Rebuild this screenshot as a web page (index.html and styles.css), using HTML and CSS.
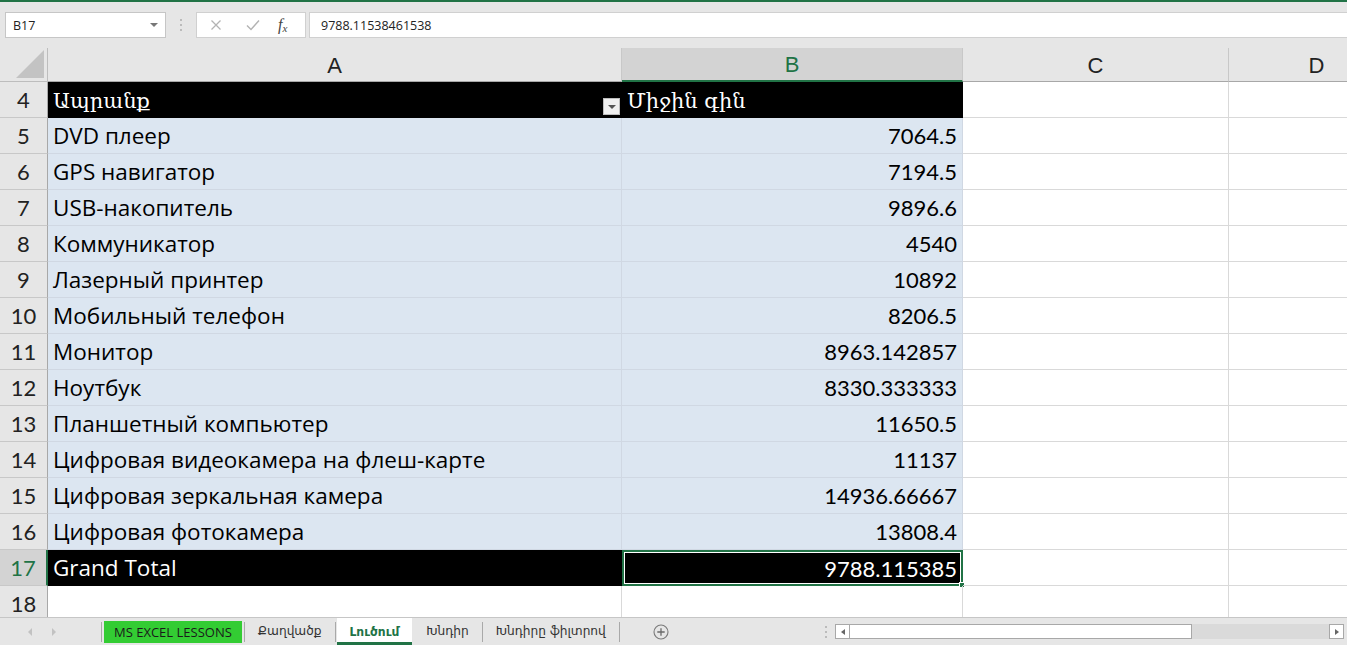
FILE: index.html
```html
<!DOCTYPE html>
<html>
<head>
<meta charset="utf-8">
<link rel="stylesheet" href="styles.css">
</head>
<body>
<div class="app">
  <div class="topline"></div>
  <div class="fbar">
    <div class="namebox"><span>B17</span><span class="nb-arrow"></span></div>
    <div class="fb-dots"><i></i><i></i><i></i></div>
    <div class="fb-btns">
      <svg class="ic" width="12" height="12" viewBox="0 0 12 12"><path d="M1.5 1.5L10.5 10.5M10.5 1.5L1.5 10.5" stroke="#b3b3b3" stroke-width="1.3" fill="none"/></svg>
      <svg class="ic" width="14" height="12" viewBox="0 0 14 12"><path d="M1 6.5L5 10.5L13 1.5" stroke="#b3b3b3" stroke-width="1.4" fill="none"/></svg>
      <span class="fx">f<sub>x</sub></span>
    </div>
    <div class="finput">9788.11538461538</div>
  </div>
  <div class="sheet">
    <div class="grid">
      <div class="corner"><span class="tri"></span></div>
      <div class="ch">A</div>
      <div class="ch sel">B</div>
      <div class="ch">C</div>
      <div class="ch">D</div>

      <div class="rh">4</div>
      <div class="c hd hd-a">Ապրանք<span class="dd"></span></div>
      <div class="c hd">Միջին գին</div>
      <div class="c"></div><div class="c"></div>

      <div class="rh">5</div><div class="c d t">DVD плеер</div><div class="c d n">7064.5</div><div class="c"></div><div class="c"></div>
      <div class="rh">6</div><div class="c d t">GPS навигатор</div><div class="c d n">7194.5</div><div class="c"></div><div class="c"></div>
      <div class="rh">7</div><div class="c d t">USB-накопитель</div><div class="c d n">9896.6</div><div class="c"></div><div class="c"></div>
      <div class="rh">8</div><div class="c d t">Коммуникатор</div><div class="c d n">4540</div><div class="c"></div><div class="c"></div>
      <div class="rh">9</div><div class="c d t">Лазерный принтер</div><div class="c d n">10892</div><div class="c"></div><div class="c"></div>
      <div class="rh">10</div><div class="c d t">Мобильный телефон</div><div class="c d n">8206.5</div><div class="c"></div><div class="c"></div>
      <div class="rh">11</div><div class="c d t">Монитор</div><div class="c d n">8963.142857</div><div class="c"></div><div class="c"></div>
      <div class="rh">12</div><div class="c d t">Ноутбук</div><div class="c d n">8330.333333</div><div class="c"></div><div class="c"></div>
      <div class="rh">13</div><div class="c d t">Планшетный компьютер</div><div class="c d n">11650.5</div><div class="c"></div><div class="c"></div>
      <div class="rh">14</div><div class="c d t">Цифровая видеокамера на флеш-карте</div><div class="c d n">11137</div><div class="c"></div><div class="c"></div>
      <div class="rh">15</div><div class="c d t">Цифровая зеркальная камера</div><div class="c d n">14936.66667</div><div class="c"></div><div class="c"></div>
      <div class="rh">16</div><div class="c d t">Цифровая фотокамера</div><div class="c d n">13808.4</div><div class="c"></div><div class="c"></div>

      <div class="rh sel">17</div>
      <div class="c tot t">Grand Total</div>
      <div class="c tot n active">9788.115385<span class="handle"></span></div>
      <div class="c"></div><div class="c"></div>

      <div class="rh">18</div><div class="c"></div><div class="c"></div><div class="c"></div><div class="c"></div>
    </div>
  </div>
  <div class="tabbar">
    <div class="nav"><span class="tl"></span><span class="tr"></span></div>
    <div class="tabs">
      <span class="sep"></span>
      <span class="tab green">MS EXCEL LESSONS</span>
      <span class="sep"></span>
      <span class="tab arm">Քաղվածք</span>
      <span class="sep"></span>
      <span class="tab arm act">Լուծում</span>
      <span class="tab arm">Խնդիր</span>
      <span class="sep"></span>
      <span class="tab arm">Խնդիրը ֆիլտրով</span>
      <span class="sep"></span>
      <span class="add">
        <svg width="16" height="16" viewBox="0 0 16 16"><circle cx="8" cy="8" r="7" stroke="#7a7a7a" stroke-width="1.1" fill="none"/><path d="M8 4.3V11.7M4.3 8H11.7" stroke="#6a6a6a" stroke-width="1.3"/></svg>
      </span>
    </div>
    <div class="hs-dots"><i></i><i></i><i></i></div>
    <div class="hscroll">
      <span class="sbtn"><span class="al"></span></span>
      <span class="thumb"></span>
      <span class="track"></span>
      <span class="sbtn"><span class="ar"></span></span>
    </div>
  </div>
</div>
</body>
</html>
```

FILE: styles.css
```css
* { box-sizing: border-box; }
html, body { margin: 0; padding: 0; }
body { width: 1347px; height: 645px; overflow: hidden; background: #fff; font-family: "Lato", "Liberation Sans", sans-serif; }
.app { display: flex; flex-direction: column; height: 645px; }
.topline { height: 2px; background: #217346; flex: none; }
.fbar { height: 46px; flex: none; background: #e6e6e6; display: flex; align-items: flex-start; padding-top: 10px; padding-left: 5px; }
.namebox { width: 161px; height: 26px; background: #fff; border: 1px solid #c6c6c6; display: flex; align-items: center; justify-content: space-between; padding: 0 7px 0 7px; font: 12.5px "Open Sans", "Liberation Sans", sans-serif; color: #222; }
.nb-arrow { width: 0; height: 0; border-left: 4px solid transparent; border-right: 4px solid transparent; border-top: 4px solid #777; }
.fb-dots { width: 30px; height: 26px; display: flex; flex-direction: column; align-items: center; justify-content: center; gap: 3px; }
.fb-dots i, .hs-dots i { display: block; width: 2px; height: 2px; background: #bbb; }
.fb-btns { width: 110px; height: 26px; background: #fff; border: 1px solid #d0d0d0; display: flex; align-items: center; padding-left: 13px; }
.fb-btns .ic:nth-child(1) { margin-right: 24px; }
.fb-btns .ic:nth-child(2) { margin-right: 18px; }
.fx { font: italic 16px "Liberation Serif", serif; color: #444; line-height: 1; }
.fx sub { font-size: 11px; vertical-align: -2px; }
.finput { flex: 1; margin-left: 3px; height: 26px; background: #fff; border: 1px solid #d0d0d0; border-right: none; display: flex; align-items: center; padding-left: 11px; font: 12.5px "Open Sans", "Liberation Sans", sans-serif; color: #222; }

.sheet { flex: 1; overflow: hidden; }
.grid { display: grid; grid-template-columns: 48px 574px 341px 266px 176px; grid-template-rows: 34px repeat(14, 36px) 36px; }
.corner { background: #e6e6e6; border-right: 1px solid #bdbdbd; border-bottom: 1px solid #bdbdbd; position: relative; }
.tri { position: absolute; right: 3px; bottom: 3px; width: 0; height: 0; border-left: 28px solid transparent; border-bottom: 28px solid #c3c3c3; }
.ch { background: #e6e6e6; border-right: 1px solid #c8c8c8; border-bottom: 1px solid #a8a8a8; display: flex; align-items: center; justify-content: center; font: 22px "Liberation Sans", sans-serif; color: #222; padding-top: 2px; }
.ch.sel { background: #d3d3d3; color: #217346; border-bottom: 2px solid #217346; }
.rh { background: #e6e6e6; border-right: 1px solid #a8a8a8; border-bottom: 1px solid #c8c8c8; display: flex; align-items: center; justify-content: center; font: 22px "Lato", "Liberation Sans", sans-serif; color: #222; }
.rh.sel { background: #d3d3d3; color: #217346; border-right: 2px solid #217346; }
.c { border-right: 1px solid #d9d9d9; border-bottom: 1px solid #d9d9d9; display: flex; align-items: center; padding: 0 5px; font-size: 22px; color: #000; white-space: nowrap; position: relative; }
.c.t { font-family: "Open Sans", "Liberation Sans", sans-serif; font-size: 22.5px; }
.c.d { background: #dce6f1; border-color: #d0d8e3; }
.c.n { justify-content: flex-end; }
.c.hd { background: #000; color: #fff; font-family: "DejaVu Serif", "Liberation Serif", serif; font-size: 21px; border-color: #000; padding-top: 2px; }
.c.hd-a { border-right-color: #000; }
.c.tot { background: #000; color: #fff; border-color: #000; }
.c.active { border: 2px solid #217346; box-shadow: inset 0 0 0 1px #fff; padding-right: 4px; }
.handle { position: absolute; right: -4px; bottom: -4px; width: 6px; height: 6px; background: #217346; border: 1px solid #fff; }
.dd { position: absolute; right: 1px; bottom: 2px; width: 17px; height: 17px; background: #f0f0f0; border: 1px solid #bdbdbd; }
.dd::after { content: ""; position: absolute; left: 4px; top: 6px; border-left: 4px solid transparent; border-right: 4px solid transparent; border-top: 4px solid #555; }

.tabbar { height: 28px; flex: none; background: #e6e6e6; display: flex; align-items: stretch; border-top: 1px solid #c6c6c6; }
.nav { width: 101px; display: flex; align-items: center; padding-left: 28px; gap: 20px; }
.tl { width: 0; height: 0; border-top: 4px solid transparent; border-bottom: 4px solid transparent; border-right: 4px solid #c2c2c2; }
.tr { width: 0; height: 0; border-top: 4px solid transparent; border-bottom: 4px solid transparent; border-left: 4px solid #c2c2c2; }
.tabs { display: flex; align-items: center; width: 716px; }
.sep { width: 1px; height: 20px; background: #a9a9a9; }
.tab { height: 27px; display: flex; align-items: center; padding: 0 13px; font: 13px "Open Sans", "DejaVu Sans", sans-serif; color: #333; margin-top: -1px; }
.tab.arm { font-family: "DejaVu Sans", sans-serif; font-size: 12.2px; }
.tab.green { background: #33cc33; color: #1a1a1a; height: 22px; margin: 0 2px; padding: 0 10px; }
.tab.act { background: #fff; color: #217346; font-weight: bold; border-bottom: 3px solid #217346; padding: 3px 13px 0 13px; margin: 0 1px; }
.add { margin-left: 33px; display: flex; align-items: center; }
.hs-dots { width: 18px; display: flex; flex-direction: column; align-items: center; justify-content: center; gap: 3px; }
.hscroll { flex: 1; display: flex; align-items: center; padding-right: 3px; }
.sbtn { width: 15px; height: 15px; background: #fff; border: 1px solid #a8a8a8; display: flex; align-items: center; justify-content: center; flex: none; }
.al { border-top: 3px solid transparent; border-bottom: 3px solid transparent; border-right: 4px solid #666; }
.ar { border-top: 3px solid transparent; border-bottom: 3px solid transparent; border-left: 4px solid #666; }
.thumb { width: 342px; height: 15px; background: #fff; border: 1px solid #a8a8a8; border-left: none; }
.track { flex: 1; height: 15px; background: #dadada; }
```
